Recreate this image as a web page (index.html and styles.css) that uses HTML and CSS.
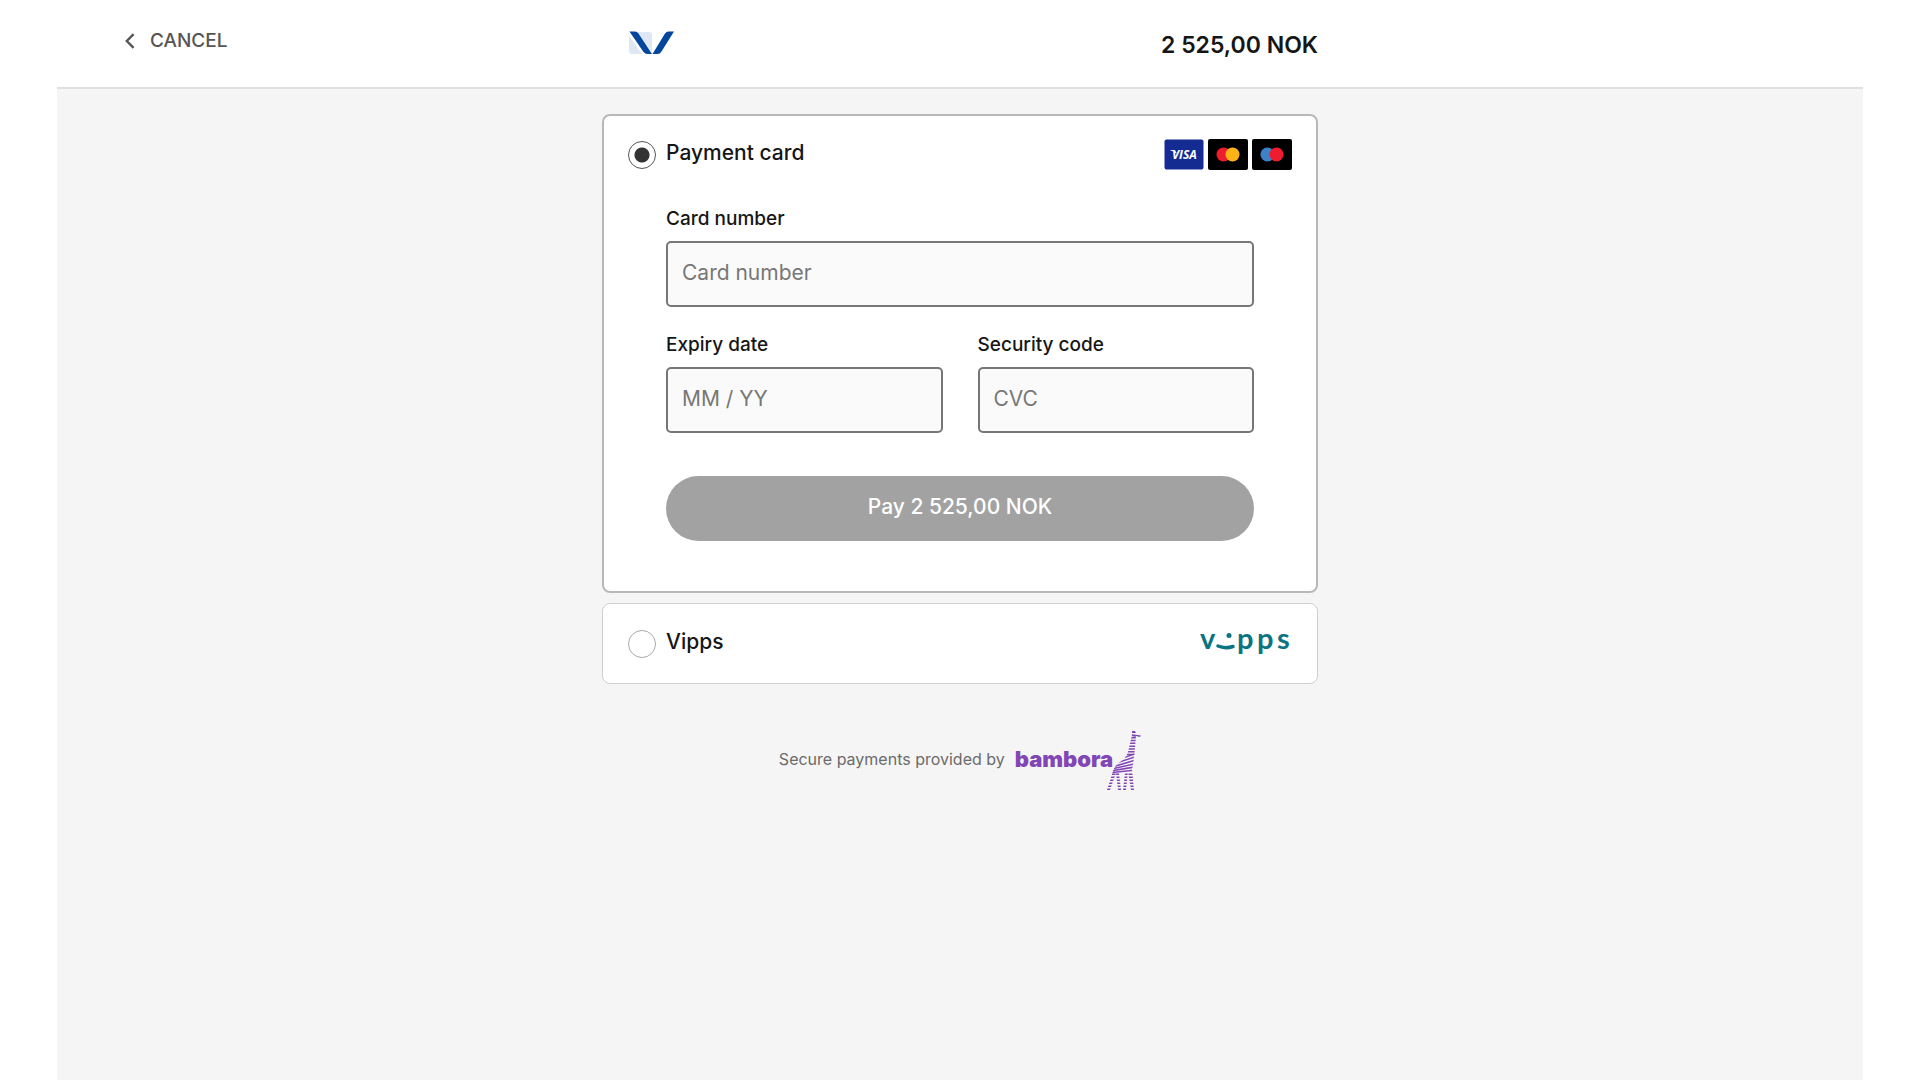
FILE: index.html
```
<!DOCTYPE html>
<html lang="en">
<head>
<meta charset="utf-8">
<meta name="viewport" content="width=device-width, initial-scale=1">
<title>Payment</title>
<link rel="stylesheet" href="styles.css">
</head>
<body>
<div class="page">
  <header class="topbar">
    <a class="cancel" href="#">
      <svg class="cancel-icon" width="10" height="16" viewBox="0 0 10 16" aria-hidden="true"><path d="M8.6 1.2 1.8 8l6.8 6.8" fill="none" stroke="currentColor" stroke-width="2.4"/></svg>
      <span>CANCEL</span>
    </a>
    <div class="summary">
      <svg class="merchant" width="46" height="24" viewBox="0 0 46 24" role="img" aria-label="Merchant">
        <path d="M8 1h12q3 0 3 3v17.500L10 3zM0 4.500 13 23H3q-3 0-3-3z" fill="#dfe6f4"/>
        <path d="M0.500 0.500H6Q8 0.500 9.500 2.500L23 23H18.500Q16 23 14.500 21z" fill="#04469b"/>
        <path d="M45 0.500H39.500Q37.500 0.500 36 2.500L23.500 23H28.500Q31 23 32.500 20.500z" fill="#04469b"/>
      </svg>
      <strong class="amount">2 525,00 NOK</strong>
    </div>
  </header>

  <main class="checkout">
    <form class="methods">
      <section class="method method-active">
        <div class="method-head">
          <label class="choice"><input class="radio" type="radio" name="method" checked><span>Payment card</span></label>
          <div class="brands">
            <svg width="40" height="31" viewBox="0 0 40 31" aria-hidden="true"><rect x=".5" y=".5" width="39" height="30" rx="2" fill="#142b92"/><path d="M6.500 11h4l2 2.500-.5 1Q10 12 6.500 11.400z" fill="#fff"/><text class="visa" x="8" y="20">VISA</text></svg>
            <svg width="40" height="31" viewBox="0 0 40 31" aria-hidden="true"><rect width="40" height="31" rx="2"/><circle cx="15.500" cy="15.500" r="7" fill="#ed1c2e"/><circle cx="24.500" cy="15.500" r="7" fill="#fcb315"/></svg>
            <svg width="40" height="31" viewBox="0 0 40 31" aria-hidden="true"><rect width="40" height="31" rx="2"/><circle cx="15.500" cy="15.500" r="7" fill="#3d82c9"/><circle cx="24.500" cy="15.500" r="7" fill="#ed1c2e"/></svg>
          </div>
        </div>
        <div class="fields">
          <div class="field field-wide">
            <label for="number">Card number</label>
            <input id="number" type="text" placeholder="Card number">
          </div>
          <div class="field">
            <label for="expiry">Expiry date</label>
            <input id="expiry" type="text" placeholder="MM / YY">
          </div>
          <div class="field">
            <label for="cvc">Security code</label>
            <input id="cvc" type="text" placeholder="CVC">
          </div>
          <button class="pay" type="button">Pay 2 525,00 NOK</button>
        </div>
      </section>

      <section class="method">
        <div class="method-head">
          <label class="choice"><input class="radio" type="radio" name="method"><span>Vipps</span></label>
          <svg class="vipps" width="92" height="48" viewBox="0 0 92 48" role="img" aria-label="vipps">
            <text x="0" y="29">v</text>
            <circle cx="29" cy="15.500" r="2.500"/>
            <path d="M18 26Q25 29 33 26.500" fill="none" stroke="#0b7482" stroke-width="3.500" stroke-linecap="round"/>
            <text x="37" y="29">p</text><text x="57" y="29">p</text><text x="77" y="29">s</text>
          </svg>
        </div>
      </section>
    </form>

    <footer class="provider">
      <span class="provider-text">Secure payments provided by</span>
      <span class="provider-text bambora">bambora</span>
      <svg class="giraffe" width="34" height="60" viewBox="0 0 34 60" aria-hidden="true">
        <defs>
          <clipPath id="giraffe-shape"><path d="M25 0h3l1 2 5 2-1 2-4-1-1 12-2 17-1 4 2 21h-3L21 40l-2 19h-3l2-17h-6l2 17h-3L9 42 3 59H0L6 40Q8 34 13 31 19 27 21 21l4-17z"/></clipPath>
        </defs>
        <g clip-path="url(#giraffe-shape)" fill="none" stroke="#8246b5">
          <path d="M0 1h34M20 3.500 34 5.500" stroke-width="1.800"/>
          <path d="M25 6v18" stroke-width="18" stroke-dasharray="1.500 1.300"/>
          <path d="M0 32 34 21M0 35 34 24M0 37.500 34 27.500M0 39 34 31.500M0 40.500 34 35M0 42 34 38.500" stroke-width="1.600"/>
          <path d="M16 42.500v17" stroke-width="34" stroke-dasharray="1.500 1.500"/>
        </g>
      </svg>
    </footer>
  </main>
</div>
</body>
</html>
```
FILE: styles.css
```
* { box-sizing: border-box; }

body {
  margin: 0;
  background: #fff;
  color: #161616;
  font-family: Inter, "Liberation Sans", sans-serif;
}

.page {
  min-height: 100vh;
  margin: 0 57px;
  background: #f5f5f5;
}

.topbar {
  display: grid;
  grid-template-columns: 1fr minmax(0, 716px) 1fr;
  min-height: 89px;
  background: #fff;
  border-bottom: 2px solid #e0e0e0;
}

.cancel {
  display: flex;
  align-items: center;
  align-self: start;
  gap: 15px;
  padding: 29px 0 0 68px;
  color: #555;
  font-size: 19px;
  font-weight: 500;
  line-height: 24px;
  text-decoration: none;
}

.summary {
  display: flex;
  justify-content: space-between;
  align-items: flex-start;
  padding: 31px 0 0 27px;
}

.amount {
  font-size: 23px;
  font-weight: 600;
  line-height: 28px;
}

.checkout {
  max-width: 716px;
  margin: 0 auto;
  padding: 25px 0;
}

.methods {
  display: grid;
  gap: 10px;
}

.method {
  padding: 24px 25px;
  background: #fff;
  border: 1px solid #cfcfcf;
  border-radius: 8px;
}

.method-active {
  padding: 23px 24px 50px;
  border: 2px solid #b8b8b8;
}

.method-head {
  display: flex;
  justify-content: space-between;
  align-items: center;
  height: 31px;
}

.choice {
  display: flex;
  align-items: center;
  gap: 10px;
  font-size: 21px;
  font-weight: 500;
  line-height: 28px;
}

.choice span { padding-bottom: 3px; }

.radio {
  width: 28px;
  height: 28px;
  margin: 0;
  appearance: none;
  background: #fff;
  border: 1px solid #aaa;
  border-radius: 50%;
}

.radio:checked {
  border-color: #555;
  background: radial-gradient(circle, #333 7px, #fff 8px);
}

.brands {
  display: flex;
  gap: 4px;
}

.visa {
  fill: #fff;
  font: italic 700 12px "Open Sans", sans-serif;
}

.fields {
  display: grid;
  grid-template-columns: 1fr 1fr;
  gap: 26px 35px;
  padding: 37px 38px 0;
}

.field {
  display: grid;
  gap: 10px;
  font-size: 19px;
  font-weight: 500;
  line-height: 24px;
}

.field-wide,
.pay { grid-column: 1 / -1; }

.field input {
  width: 100%;
  height: 66px;
  padding: 0 14px 3px;
  background: #fafafa;
  border: 2px solid #777;
  border-radius: 5px;
  color: #161616;
  font: 400 21px Inter, "Liberation Sans", sans-serif;
}

.field input::placeholder { color: #777; }

.pay {
  height: 65px;
  margin-top: 17px;
  padding: 0 16px 4px;
  background: #a2a2a2;
  border: 0;
  border-radius: 33px;
  color: #fff;
  font: 500 21px Inter, "Liberation Sans", sans-serif;
}

.vipps {
  fill: #0b7482;
  font: 700 29px Lato, sans-serif;
}

.provider {
  display: flex;
  justify-content: center;
  align-items: center;
  margin-top: 47px;
  color: #6b6b6b;
  font-size: 16px;
  line-height: 24px;
}

.provider-text { padding-bottom: 4px; }

.bambora {
  margin-left: 10px;
  color: #8246b5;
  font-size: 22px;
  font-weight: 900;
}

.giraffe { margin-left: -6px; }
```
